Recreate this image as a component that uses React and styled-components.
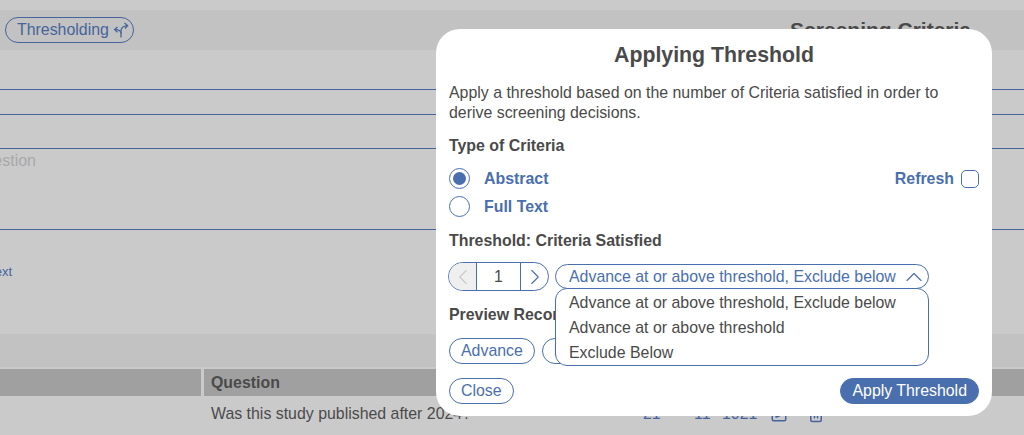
import React from 'react'
import styled, { createGlobalStyle } from 'styled-components'
import { ChevronLeft, ChevronRight, ChevronUp, Trash2, SquarePen } from 'lucide-react'

const blue = '#4a6fae'
const dimBlue = '#46649c'
const dark = '#4a4a4a'

const GlobalStyle = createGlobalStyle`
    html, body {
        margin: 0;
        padding: 0;
        background: #cacaca;
    }
    body {
        font-family: "Liberation Sans", Arial, sans-serif;
        font-size: 15.9px;
    }
`

const Page = styled.div`
    position: relative;
    width: 1024px;
    height: 435px;
    overflow: hidden;
    background: #cacaca;
`

const TopBar = styled.div`
    height: 40px;
    margin-top: 10px;
    background: #c2c2c2;
    display: flex;
    align-items: center;
    justify-content: space-between;
    padding: 0 53px 0 5px;
`

const OutlineTag = styled.div`
    height: 26px;
    width: 129px;
    box-sizing: border-box;
    border: 1.5px solid ${dimBlue};
    border-radius: 13px;
    padding-left: 11px;
    display: flex;
    align-items: center;
    gap: 4px;
    color: ${dimBlue};
`

const BackTitle = styled.div`
    font-size: 21px;
    font-weight: 700;
    color: ${dark};
`

const Rule = styled.div`
    height: ${p => p.$gap}px;
    box-sizing: border-box;
    border-bottom: 1px solid ${dimBlue};
`

const Clipped = styled.div`
    box-sizing: border-box;
    width: ${p => p.$w}px;
    height: ${p => p.$h}px;
    display: flex;
    justify-content: flex-end;
    white-space: nowrap;
    font-size: ${p => p.$size}px;
    color: ${p => p.$color};
    padding-top: ${p => p.$top}px;
`

const Band = styled.div`
    height: 33px;
    background: #c2c2c2;
`

const TableHead = styled.div`
    display: grid;
    grid-template-columns: 201px 1fr;
    gap: 3px;
    height: 27px;
    margin-top: 2px;
`

const HeadCell = styled.div`
    background: #a0a0a0;
    padding-left: 7px;
    display: flex;
    align-items: center;
    font-weight: 700;
    color: ${dark};
`

const TableRow = styled.div`
    display: grid;
    grid-template-columns: 432px 51px 28px 48px 37px auto;
    align-items: center;
    padding-left: 211px;
    height: 36px;
    color: ${dark};
`

const RowLink = styled.span`
    display: flex;
    color: ${dimBlue};
`

const Modal = styled.div`
    position: absolute;
    left: 436px;
    top: 29px;
    width: 556px;
    height: 387px;
    box-sizing: border-box;
    padding: 14px 13px 0;
    background: #fff;
    border-radius: 24px;
    color: ${dark};
    display: flex;
    flex-direction: column;
`

const Title = styled.h2`
    margin: 0;
    font-size: 21.3px;
    line-height: 24px;
    font-weight: 700;
    text-align: center;
`

const Intro = styled.p`
    margin: 16px 0 0;
    line-height: 20px;
`

const Label = styled.div`
    margin-top: ${p => p.$top}px;
    line-height: 18px;
    font-weight: 700;
`

const RadioBlock = styled.div`
    margin-top: 13px;
    display: flex;
    justify-content: space-between;
    align-items: flex-start;
`

const RadioList = styled.div`
    display: flex;
    flex-direction: column;
    gap: 7px;
`

const RadioRow = styled.div`
    display: flex;
    align-items: center;
    gap: 14px;
    font-weight: 700;
    color: ${blue};
`

const RadioDot = styled.span`
    width: 21px;
    height: 21px;
    box-sizing: border-box;
    border: 1.5px solid ${blue};
    border-radius: 50%;
    display: flex;
    align-items: center;
    justify-content: center;

    &::after {
        content: '';
        width: 13px;
        height: 13px;
        border-radius: 50%;
        background: ${p => (p.$on ? blue : 'transparent')};
    }
`

const RefreshRow = styled.div`
    display: flex;
    align-items: center;
    gap: 7px;
    height: 21px;
    font-weight: 700;
    color: ${blue};
`

const CheckBox = styled.span`
    width: 18px;
    height: 18px;
    box-sizing: border-box;
    border: 1.5px solid ${blue};
    border-radius: 5px;
`

const ControlRow = styled.div`
    margin-top: 12px;
    display: flex;
    align-items: center;
    gap: 6px;
    position: relative;
`

const Stepper = styled.div`
    width: 101px;
    height: 29px;
    margin-left: -1px;
    box-sizing: border-box;
    border: 1.5px solid ${blue};
    border-radius: 15px;
    display: grid;
    grid-template-columns: 27px 1fr 27px;
    overflow: hidden;
`

const StepButton = styled.div`
    display: flex;
    align-items: center;
    justify-content: center;
    color: ${p => (p.$off ? '#c8c8c8' : blue)};
    background: ${p => (p.$off ? '#efefef' : 'transparent')};
`

const StepValue = styled.div`
    display: flex;
    align-items: center;
    justify-content: center;
    border-left: 1.5px solid ${blue};
    border-right: 1.5px solid ${blue};
`

const SelectBox = styled.div`
    width: 374px;
    height: 25px;
    box-sizing: border-box;
    border: 1.5px solid ${blue};
    border-radius: 13px;
    padding: 0 0 0 13px;
    display: flex;
    align-items: center;
    justify-content: space-between;
    color: ${blue};
`

const Menu = styled.div`
    position: absolute;
    left: 106px;
    top: 26px;
    width: 374px;
    height: 78px;
    box-sizing: border-box;
    background: #fff;
    border: 1.5px solid ${blue};
    border-radius: 12px;
    padding: 1px 0 0 13px;
    color: ${dark};
`

const MenuItem = styled.div`
    height: 25px;
    display: flex;
    align-items: center;
`

const ChipRow = styled.div`
    margin-top: 14px;
    display: flex;
    gap: 7px;
`

const Chip = styled.div`
    height: 26px;
    box-sizing: border-box;
    border: 1.5px solid ${blue};
    border-radius: 13px;
    padding: 0 11px;
    display: flex;
    align-items: center;
    color: ${blue};
    background: #fff;
`

const Footer = styled.div`
    margin-top: 14px;
    display: flex;
    justify-content: space-between;
`

const ApplyButton = styled(Chip)`
    background: ${blue};
    color: #fff;
`

function RouteIcon() {
    return (
        <svg width="16" height="16" viewBox="0 0 16 16" fill="none" stroke={dimBlue} strokeWidth="1.3">
            <path d="M8 15.5V9C8 6 9.5 4.2 14 3.6" />
            <path d="M11.5 1 14.6 3.5 12 6.5" />
            <path d="M8 11.5C8 9.2 6.5 7.6 2 7.6" />
            <path d="M4.5 5 1.6 7.6 4.5 10.2" />
        </svg>
    )
}

export default function App() {
    return (
        <Page>
            <GlobalStyle />
            <TopBar>
                <OutlineTag>
                    Thresholding <RouteIcon />
                </OutlineTag>
                <BackTitle>Screening Criteria</BackTitle>
            </TopBar>
            <Rule $gap={40} />
            <Rule $gap={25} />
            <Rule $gap={34} />
            <Clipped $w={36} $h={70} $size={16} $color="#a8a8a8" $top={3}>Question</Clipped>
            <Rule $gap={11} />
            <Clipped $w={12} $h={104} $size={13} $color={dimBlue} $top={34}>Full Text</Clipped>
            <Band />
            <TableHead>
                <HeadCell />
                <HeadCell>Question</HeadCell>
            </TableHead>
            <TableRow>
                <span>Was this study published after 2024?</span>
                <RowLink>21</RowLink>
                <RowLink>11</RowLink>
                <RowLink>1021</RowLink>
                <RowLink><SquarePen size={18} /></RowLink>
                <RowLink><Trash2 size={18} /></RowLink>
            </TableRow>

            <Modal>
                <Title>Applying Threshold</Title>
                <Intro>
                    Apply a threshold based on the number of Criteria satisfied in order to derive screening decisions.
                </Intro>
                <Label $top={14}>Type of Criteria</Label>
                <RadioBlock>
                    <RadioList>
                        <RadioRow><RadioDot $on />Abstract</RadioRow>
                        <RadioRow><RadioDot />Full Text</RadioRow>
                    </RadioList>
                    <RefreshRow>Refresh <CheckBox /></RefreshRow>
                </RadioBlock>
                <Label $top={15}>Threshold: Criteria Satisfied</Label>
                <ControlRow>
                    <Stepper>
                        <StepButton $off><ChevronLeft size={26} strokeWidth={1} /></StepButton>
                        <StepValue>1</StepValue>
                        <StepButton><ChevronRight size={26} strokeWidth={1} /></StepButton>
                    </Stepper>
                    <SelectBox>
                        Advance at or above threshold, Exclude below
                        <ChevronUp size={28} strokeWidth={1} />
                    </SelectBox>
                    <Menu>
                        <MenuItem>Advance at or above threshold, Exclude below</MenuItem>
                        <MenuItem>Advance at or above threshold</MenuItem>
                        <MenuItem>Exclude Below</MenuItem>
                    </Menu>
                </ControlRow>
                <Label $top={15}>Preview Recommendations</Label>
                <ChipRow>
                    <Chip>Advance</Chip>
                    <Chip>Exclude</Chip>
                </ChipRow>
                <Footer>
                    <Chip>Close</Chip>
                    <ApplyButton>Apply Threshold</ApplyButton>
                </Footer>
            </Modal>
        </Page>
    )
}
